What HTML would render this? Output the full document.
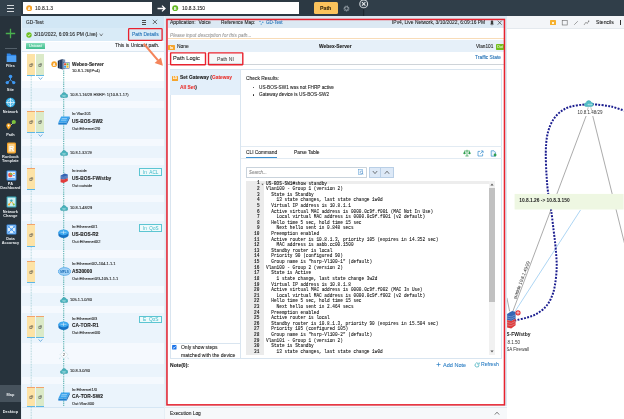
<!DOCTYPE html>
<html lang="en"><head><meta charset="utf-8"><title>Path Details</title>
<style>
*{box-sizing:border-box;margin:0;padding:0}
html,body{width:624px;height:419px;overflow:hidden;background:#fff}
body{position:relative;font-family:"Liberation Sans",Arial,sans-serif;font-size:5px;color:#222;line-height:1}
.a{position:absolute}
.t{position:absolute;white-space:pre;line-height:1;transform:scale(.125);transform-origin:0 0;-webkit-text-stroke:0.7px currentColor}
.b{font-weight:bold}
.sb{position:absolute;left:0;width:166.4px;text-align:center;color:#e8ecef;font-size:30.8px;font-weight:bold;line-height:36px;white-space:pre;transform:scale(.125);transform-origin:0 0}
.mono{font-family:"Liberation Mono",monospace;-webkit-text-stroke:0}
.ns{-webkit-text-stroke:0}
svg text{font-family:"Liberation Sans",Arial,sans-serif}
#root{position:absolute;left:0;top:0;width:624px;height:419px;overflow:hidden;will-change:transform}
</style></head><body>
<div id="root"><div class="a" style="left:165px;top:15.8px;width:342.5px;height:403.2px;background:#dce9f3"></div><div class="a" style="left:167.9px;top:20px;width:335.9px;height:385px;background:#fff"></div><div class="a" style="left:167.9px;top:20px;width:335.9px;height:7.7px;background:#dce9f3"></div><div class="t" style="left:169.5px;top:19.61px;font-size:39.84px;color:#222">Application:  Voice</div><div class="t" style="left:221.2px;top:19.7px;font-size:38.45px;color:#222">Reference Map:</div><svg class="a" style="left:259.3px;top:19.7px" width="5" height="5" viewBox="0 0 5 5"><circle cx="1" cy="1.4" r="0.7" fill="#3a8fd0"/><circle cx="3.8" cy="2.2" r="0.7" fill="#3a8fd0"/><circle cx="2.2" cy="4.1" r="0.7" fill="#3a8fd0"/></svg><div class="t" style="left:266.4px;top:19.86px;font-size:36.21px;color:#1f6fb5">GD-Test</div><div class="t" style="left:391.8px;top:19.65px;font-size:39.22px;color:#222">IPv4, Live Network, 3/10/2022, 6:09:16 PM</div><svg class="a" style="left:489.8px;top:19.8px" width="4" height="6" viewBox="0 0 4 6"><path d="M1.1 0.8h1.8v2.6l0.6 0.8h-3l0.6-0.8zM2 4.2v1.4" fill="#333" stroke="#333" stroke-width="0.4"/></svg><svg class="a" style="left:497px;top:20.3px" width="6" height="6" viewBox="0 0 6 6"><path d="M0.7 0.7L4.7 4.7M4.7 0.7L0.7 4.7" stroke="#333" stroke-width="0.65"/></svg><div class="t" style="left:169.5px;top:32.6px;font-size:38.46px;color:#9a9a9a;font-style:italic">Please input description for this path...</div><div class="a" style="left:167.9px;top:38px;width:335.9px;height:0.8px;background:#f8dcb8"></div><div class="a" style="left:167.9px;top:40.4px;width:335.9px;height:11.6px;background:#e6f0f9"></div><div class="a" style="left:167.9px;top:44.5px;width:6.8px;height:5.2px;background:#f5a52e;border-radius:0.6px"></div><div class="t b" style="left:169.6px;top:45.63px;font-size:25.6px;color:#fff">In</div><div class="t" style="left:177px;top:43.76px;font-size:39.15px;color:#222">None</div><div class="t b" style="left:318.7px;top:44.4px;font-size:39.21px;color:#1a1a1a">Webex-Server</div><div class="t" style="left:476px;top:43.85px;font-size:37.71px;color:#222">Vlan101</div><div class="a" style="left:496px;top:43.9px;width:7.8px;height:5.8px;background:#72bf1e;border-radius:0.7px"></div><div class="t" style="left:497.2px;top:45.14px;font-size:28.8px;color:#eaf8d6">Out</div><div class="a" style="left:167.9px;top:64px;width:335.9px;height:0.7px;background:#cfd4d9"></div><div class="a" style="left:170.6px;top:52.9px;width:34.9px;height:11.8px;background:#fff"></div><div class="t" style="left:173.2px;top:55.32px;font-size:45.37px;color:#222">Path Logic</div><div class="a" style="left:208.5px;top:52.9px;width:34.3px;height:11.8px;background:#f6f7f8"></div><div class="a" style="left:209px;top:62.6px;width:33.4px;height:0.6px;background:#d5d9dd"></div><div class="t" style="left:216.9px;top:56.62px;font-size:40.54px;color:#555">Path NI</div><div class="t" style="left:475.4px;top:55.37px;font-size:38.98px;color:#1f6fb5">Traffic State</div><div class="a" style="left:169.5px;top:69.3px;width:332.3px;height:290px;background:#fff;border:0.6px solid #d9e5f0"></div><div class="a" style="left:170.1px;top:70px;width:70.2px;height:24.8px;background:#e3effa"></div><div class="a" style="left:240.3px;top:69.8px;width:0.6px;height:289px;background:#d9e5f0"></div><div class="a" style="left:172.3px;top:75.8px;width:6px;height:4.8px;background:#f5a52e;border-radius:0.6px"></div><div class="t b" style="left:173.4px;top:76.88px;font-size:23.2px;color:#fff">LG</div><div class="t b" style="left:180.4px;top:75.47px;font-size:38.91px;color:#1a1a1a">Set Gateway (<span style="color:#e8332f">Gateway</span></div><div class="t b" style="left:180.4px;top:84.67px;font-size:39.01px;color:#e8332f">All Set<span style="color:#1a1a1a">)</span></div><div class="a" style="left:170.1px;top:342.8px;width:70.2px;height:0.6px;background:#d9e5f0"></div><svg class="a" style="left:172.3px;top:345.2px" width="4.6" height="4.6" viewBox="0 0 4.6 4.6"><rect x="0.1" y="0.1" width="4.4" height="4.4" rx="0.6" fill="#1a73e8"/><path d="M1 2.4L1.9 3.3L3.6 1.3" fill="none" stroke="#fff" stroke-width="0.7"/></svg><div class="t" style="left:181px;top:344.81px;font-size:39.8px;color:#222">Only show steps</div><div class="t" style="left:181px;top:352.76px;font-size:40.57px;color:#222">matched with the device</div><div class="t" style="left:245.9px;top:75.74px;font-size:39.38px;color:#222">Check Results:</div><div class="a" style="left:252.6px;top:86.8px;width:1.7px;height:1.7px;background:#222;border-radius:50%"></div><div class="a" style="left:252.6px;top:94px;width:1.7px;height:1.7px;background:#222;border-radius:50%"></div><div class="t" style="left:259.2px;top:85.06px;font-size:37.66px;color:#222">US-BOS-SW1 was not FHRP active</div><div class="t" style="left:259.2px;top:92.23px;font-size:38.08px;color:#222">Gateway device is US-BOS-SW2</div><div class="a" style="left:241px;top:146.3px;width:260.5px;height:0.6px;background:#e2ebf3"></div><div class="a" style="left:241px;top:157.7px;width:260.5px;height:0.6px;background:#e2ebf3"></div><div class="t" style="left:245.7px;top:149.8px;font-size:38.59px;color:#222">CLI Command</div><div class="a" style="left:245.7px;top:156.6px;width:31.4px;height:0.9px;background:#3a8fd0"></div><div class="t" style="left:293.5px;top:150.18px;font-size:38.76px;color:#222">Parse Table</div><svg class="a" style="left:462.8px;top:149px" width="8" height="8" viewBox="0 0 8 8"><path d="M4 0.8V7M2.4 7h3.2M1.2 2h5.6" stroke="#2e9e4f" stroke-width="0.7" fill="none"/><path d="M0.3 4.2L1.5 2.1L2.7 4.2a1.2 1 0 0 1-2.4 0zM5.3 4.2L6.5 2.1L7.7 4.2a1.2 1 0 0 1-2.4 0z" fill="#2e9e4f"/></svg><svg class="a" style="left:476.8px;top:149.5px" width="7" height="7" viewBox="0 0 7 7"><path d="M3.2 1.4H1v4.6h4.6V3.8" fill="none" stroke="#3a8fd0" stroke-width="0.7"/><path d="M3.2 3.8L6 1M4 0.9h2.1V3" fill="none" stroke="#3a8fd0" stroke-width="0.7"/></svg><svg class="a" style="left:489.5px;top:149.5px" width="7" height="7" viewBox="0 0 7 7"><path d="M1.2 0.8h2.8l1.4 1.4V6.2H1.2z" fill="#eaf4fc" stroke="#3a8fd0" stroke-width="0.7"/><circle cx="5.1" cy="5" r="1.4" fill="#2e9e4f"/></svg><div class="a" style="left:245.5px;top:166.6px;width:121.2px;height:11.2px;background:#fff;border:0.6px solid #c9d3dc;border-radius:0.6px"></div><div class="t" style="left:248.7px;top:170.0px;font-size:35.58px;color:#8c8c8c;font-style:italic">Search...</div><svg class="a" style="left:357.6px;top:169.2px" width="6" height="6" viewBox="0 0 6 6"><rect x="0.6" y="0.5" width="3.8" height="4.8" fill="#eaf4fc" stroke="#5a9bd4" stroke-width="0.5"/><circle cx="3.4" cy="3.3" r="1.2" fill="#fff" stroke="#3a7fc0" stroke-width="0.5"/><path d="M4.3 4.2L5.4 5.3" stroke="#3a7fc0" stroke-width="0.6"/></svg><div class="a" style="left:369px;top:166.6px;width:12px;height:11.2px;background:#dde9f7;border:0.6px solid #b9cfe6"></div><div class="a" style="left:381px;top:166.6px;width:12.8px;height:11.2px;background:#dde9f7;border:0.6px solid #b9cfe6;border-left:none"></div><svg class="a" style="left:371.8px;top:169.7px" width="6" height="5" viewBox="0 0 6 5"><path d="M0.8 1L3 3.6L5.2 1" fill="none" stroke="#444" stroke-width="0.7"/></svg><svg class="a" style="left:384.3px;top:169.7px" width="6" height="5" viewBox="0 0 6 5"><path d="M0.8 3.8L3 1.2L5.2 3.8" fill="none" stroke="#444" stroke-width="0.7"/></svg><div class="a" style="left:245.7px;top:181.3px;width:249.6px;height:173.4px;background:#fff"></div><div class="a" style="left:245.7px;top:181.3px;width:249.6px;height:2.4px;background:#ededed"></div><div class="a" style="left:245.7px;top:181.3px;width:18.7px;height:173.4px;background:#ebebeb"></div><div class="a" style="left:488.6px;top:181.3px;width:6.7px;height:173.4px;background:#f1f1f1"></div><div class="a" style="left:489.2px;top:187.7px;width:5.5px;height:114.6px;background:#c1c1c1"></div><svg class="a" style="left:490px;top:183.3px" width="4" height="3" viewBox="0 0 4 3"><path d="M0.4 2.4L2 0.6L3.6 2.4z" fill="#555"/></svg><svg class="a" style="left:490px;top:349.7px" width="4" height="3" viewBox="0 0 4 3"><path d="M0.4 0.6L2 2.4L3.6 0.6z" fill="#555"/></svg><div class="t b mono" style="left:256.8px;top:181.48px;font-size:36.0px;color:#222">1</div><div class="t mono" style="left:266.4px;top:181.52px;font-size:35.36px;color:#0a0a0a;-webkit-text-stroke:0.5px #0a0a0a">US-BOS-SW1#show standby</div><div class="t b mono" style="left:256.8px;top:187.1px;font-size:36.0px;color:#222">2</div><div class="t mono" style="left:266.4px;top:187.14px;font-size:35.36px;color:#0a0a0a;-webkit-text-stroke:0.5px #0a0a0a">Vlan100 - Group 1 (version 2)</div><div class="t b mono" style="left:256.8px;top:192.71px;font-size:36.0px;color:#222">3</div><div class="t mono" style="left:266.4px;top:192.75px;font-size:35.36px;color:#0a0a0a;-webkit-text-stroke:0.5px #0a0a0a">  State is Standby</div><div class="t b mono" style="left:256.8px;top:198.32px;font-size:36.0px;color:#222">4</div><div class="t mono" style="left:266.4px;top:198.36px;font-size:35.36px;color:#0a0a0a;-webkit-text-stroke:0.5px #0a0a0a">    13 state changes, last state change 1w0d</div><div class="t b mono" style="left:256.8px;top:203.94px;font-size:36.0px;color:#222">5</div><div class="t mono" style="left:266.4px;top:203.97px;font-size:35.36px;color:#0a0a0a;-webkit-text-stroke:0.5px #0a0a0a">  Virtual IP address is 10.8.1.1</div><div class="t b mono" style="left:256.8px;top:209.55px;font-size:36.0px;color:#222">6</div><div class="t mono" style="left:266.4px;top:209.59px;font-size:35.36px;color:#0a0a0a;-webkit-text-stroke:0.5px #0a0a0a">  Active virtual MAC address is 0000.0c9f.f001 (MAC Not In Use)</div><div class="t b mono" style="left:256.8px;top:215.16px;font-size:36.0px;color:#222">7</div><div class="t mono" style="left:266.4px;top:215.2px;font-size:35.36px;color:#0a0a0a;-webkit-text-stroke:0.5px #0a0a0a">    Local virtual MAC address is 0000.0c9f.f001 (v2 default)</div><div class="t b mono" style="left:256.8px;top:220.78px;font-size:36.0px;color:#222">8</div><div class="t mono" style="left:266.4px;top:220.81px;font-size:35.36px;color:#0a0a0a;-webkit-text-stroke:0.5px #0a0a0a">  Hello time 5 sec, hold time 15 sec</div><div class="t b mono" style="left:256.8px;top:226.39px;font-size:36.0px;color:#222">9</div><div class="t mono" style="left:266.4px;top:226.43px;font-size:35.36px;color:#0a0a0a;-webkit-text-stroke:0.5px #0a0a0a">    Next hello sent in 0.848 secs</div><div class="t b mono" style="left:254.1px;top:232.0px;font-size:36.0px;color:#222">10</div><div class="t mono" style="left:266.4px;top:232.04px;font-size:35.36px;color:#0a0a0a;-webkit-text-stroke:0.5px #0a0a0a">  Preemption enabled</div><div class="t b mono" style="left:254.1px;top:237.61px;font-size:36.0px;color:#222">11</div><div class="t mono" style="left:266.4px;top:237.65px;font-size:35.36px;color:#0a0a0a;-webkit-text-stroke:0.5px #0a0a0a">  Active router is 10.8.1.3, priority 105 (expires in 14.352 sec)</div><div class="t b mono" style="left:254.1px;top:243.23px;font-size:36.0px;color:#222">12</div><div class="t mono" style="left:266.4px;top:243.27px;font-size:35.36px;color:#0a0a0a;-webkit-text-stroke:0.5px #0a0a0a">    MAC address is aabb.cc00.1500</div><div class="t b mono" style="left:254.1px;top:248.84px;font-size:36.0px;color:#222">13</div><div class="t mono" style="left:266.4px;top:248.88px;font-size:35.36px;color:#0a0a0a;-webkit-text-stroke:0.5px #0a0a0a">  Standby router is local</div><div class="t b mono" style="left:254.1px;top:254.45px;font-size:36.0px;color:#222">14</div><div class="t mono" style="left:266.4px;top:254.49px;font-size:35.36px;color:#0a0a0a;-webkit-text-stroke:0.5px #0a0a0a">  Priority 90 (configured 90)</div><div class="t b mono" style="left:254.1px;top:260.07px;font-size:36.0px;color:#222">15</div><div class="t mono" style="left:266.4px;top:260.1px;font-size:35.36px;color:#0a0a0a;-webkit-text-stroke:0.5px #0a0a0a">  Group name is "hsrp-Vl100-1" (default)</div><div class="t b mono" style="left:254.1px;top:265.68px;font-size:36.0px;color:#222">16</div><div class="t mono" style="left:266.4px;top:265.72px;font-size:35.36px;color:#0a0a0a;-webkit-text-stroke:0.5px #0a0a0a">Vlan100 - Group 2 (version 2)</div><div class="t b mono" style="left:254.1px;top:271.29px;font-size:36.0px;color:#222">17</div><div class="t mono" style="left:266.4px;top:271.33px;font-size:35.36px;color:#0a0a0a;-webkit-text-stroke:0.5px #0a0a0a">  State is Active</div><div class="t b mono" style="left:254.1px;top:276.91px;font-size:36.0px;color:#222">18</div><div class="t mono" style="left:266.4px;top:276.94px;font-size:35.36px;color:#0a0a0a;-webkit-text-stroke:0.5px #0a0a0a">    1 state change, last state change 3w2d</div><div class="t b mono" style="left:254.1px;top:282.52px;font-size:36.0px;color:#222">19</div><div class="t mono" style="left:266.4px;top:282.56px;font-size:35.36px;color:#0a0a0a;-webkit-text-stroke:0.5px #0a0a0a">  Virtual IP address is 10.8.1.8</div><div class="t b mono" style="left:254.1px;top:288.13px;font-size:36.0px;color:#222">20</div><div class="t mono" style="left:266.4px;top:288.17px;font-size:35.36px;color:#0a0a0a;-webkit-text-stroke:0.5px #0a0a0a">  Active virtual MAC address is 0000.0c9f.f002 (MAC In Use)</div><div class="t b mono" style="left:254.1px;top:293.75px;font-size:36.0px;color:#222">21</div><div class="t mono" style="left:266.4px;top:293.78px;font-size:35.36px;color:#0a0a0a;-webkit-text-stroke:0.5px #0a0a0a">    Local virtual MAC address is 0000.0c9f.f002 (v2 default)</div><div class="t b mono" style="left:254.1px;top:299.36px;font-size:36.0px;color:#222">22</div><div class="t mono" style="left:266.4px;top:299.4px;font-size:35.36px;color:#0a0a0a;-webkit-text-stroke:0.5px #0a0a0a">  Hello time 5 sec, hold time 15 sec</div><div class="t b mono" style="left:254.1px;top:304.97px;font-size:36.0px;color:#222">23</div><div class="t mono" style="left:266.4px;top:305.01px;font-size:35.36px;color:#0a0a0a;-webkit-text-stroke:0.5px #0a0a0a">    Next hello sent in 2.464 secs</div><div class="t b mono" style="left:254.1px;top:310.58px;font-size:36.0px;color:#222">24</div><div class="t mono" style="left:266.4px;top:310.62px;font-size:35.36px;color:#0a0a0a;-webkit-text-stroke:0.5px #0a0a0a">  Preemption enabled</div><div class="t b mono" style="left:254.1px;top:316.2px;font-size:36.0px;color:#222">25</div><div class="t mono" style="left:266.4px;top:316.23px;font-size:35.36px;color:#0a0a0a;-webkit-text-stroke:0.5px #0a0a0a">  Active router is local</div><div class="t b mono" style="left:254.1px;top:321.81px;font-size:36.0px;color:#222">26</div><div class="t mono" style="left:266.4px;top:321.85px;font-size:35.36px;color:#0a0a0a;-webkit-text-stroke:0.5px #0a0a0a">  Standby router is 10.8.1.3, priority 90 (expires in 15.504 sec)</div><div class="t b mono" style="left:254.1px;top:327.42px;font-size:36.0px;color:#222">27</div><div class="t mono" style="left:266.4px;top:327.46px;font-size:35.36px;color:#0a0a0a;-webkit-text-stroke:0.5px #0a0a0a">  Priority 105 (configured 105)</div><div class="t b mono" style="left:254.1px;top:333.04px;font-size:36.0px;color:#222">28</div><div class="t mono" style="left:266.4px;top:333.07px;font-size:35.36px;color:#0a0a0a;-webkit-text-stroke:0.5px #0a0a0a">  Group name is "hsrp-Vl100-2" (default)</div><div class="t b mono" style="left:254.1px;top:338.65px;font-size:36.0px;color:#222">29</div><div class="t mono" style="left:266.4px;top:338.69px;font-size:35.36px;color:#0a0a0a;-webkit-text-stroke:0.5px #0a0a0a">Vlan101 - Group 1 (version 2)</div><div class="t b mono" style="left:254.1px;top:344.26px;font-size:36.0px;color:#222">30</div><div class="t mono" style="left:266.4px;top:344.3px;font-size:35.36px;color:#0a0a0a;-webkit-text-stroke:0.5px #0a0a0a">  State is Standby</div><div class="t b mono" style="left:254.1px;top:349.88px;font-size:36.0px;color:#222">31</div><div class="t mono" style="left:266.4px;top:349.91px;font-size:35.36px;color:#0a0a0a;-webkit-text-stroke:0.5px #0a0a0a">    13 state changes, last state change 1w0d</div><svg class="a" style="left:261px;top:182.6px" width="3" height="3" viewBox="0 0 3 3"><path d="M0.4 0.8L1.5 2.2L2.6 0.8z" fill="#555"/></svg><div class="t b" style="left:170.2px;top:362.84px;font-size:40.24px;color:#1a1a1a">Note(0):</div><svg class="a" style="left:436px;top:362.3px" width="5" height="5" viewBox="0 0 5 5"><path d="M2.5 0.5V4.5M0.5 2.5H4.5" stroke="#2d7fc4" stroke-width="0.7"/></svg><div class="t" style="left:442.6px;top:361.81px;font-size:44.32px;color:#2d7fc4">Add Note</div><svg class="a" style="left:473.7px;top:361.8px" width="6" height="6" viewBox="0 0 6 6"><path d="M5 3a2 2 0 1 1-0.7-1.5" fill="none" stroke="#35a9b8" stroke-width="0.7"/><path d="M5.2 0.4V2.2H3.4" fill="none" stroke="#35a9b8" stroke-width="0.7"/></svg><div class="t" style="left:481.4px;top:362.05px;font-size:40.67px;color:#2d7fc4">Refresh</div><div class="a" style="left:165.2px;top:405.6px;width:342px;height:13.4px;background:#f6f8fa"></div><div class="a" style="left:165.2px;top:407.4px;width:342px;height:0.6px;background:#e3eaf0"></div><div class="t" style="left:170.2px;top:411.28px;font-size:38.88px;color:#222">Execution Log</div><svg class="a" style="left:494px;top:411px" width="6" height="5" viewBox="0 0 6 5"><path d="M0.8 3.6L3 1.2L5.2 3.6" fill="none" stroke="#444" stroke-width="0.7"/></svg><svg class="a" style="left:164px;top:17px" width="344" height="392" viewBox="164 17 344 392"><rect x="166.95" y="19.45" width="337.5" height="385.4" fill="none" stroke="#e8222e" stroke-width="1.5"/><rect x="170.6" y="52.9" width="34.9" height="11.8" rx="0.4" fill="none" stroke="#e8222e" stroke-width="1.4"/><rect x="208.5" y="52.9" width="34.3" height="11.8" rx="0.4" fill="none" stroke="#e8222e" stroke-width="1.4"/></svg><div class="a" style="left:20.8px;top:15.8px;width:144.6px;height:403.2px;background:#e6eef5"></div><div class="a" style="left:22.3px;top:15.8px;width:141.8px;height:403.2px;background:#fff"></div><div class="a" style="left:22.3px;top:15.8px;width:141.8px;height:12.4px;background:#d2e7f5"></div><div class="a" style="left:22.3px;top:28.2px;width:141.8px;height:13.3px;background:#d9ebf7"></div><div class="a" style="left:22.3px;top:41.5px;width:141.8px;height:10px;background:#f6fafe"></div><div class="t" style="left:25.8px;top:19.62px;font-size:38.18px;color:#222">GD-Test</div><div class="a" style="left:141.8px;top:20.4px;width:4.6px;height:1px;background:#4a4a4a"></div><div class="a" style="left:141.8px;top:22.1px;width:4.6px;height:1px;background:#4a4a4a"></div><div class="a" style="left:141.8px;top:23.8px;width:4.6px;height:1px;background:#4a4a4a"></div><svg class="a" style="left:152.3px;top:19.3px" width="6" height="6" viewBox="0 0 6 6"><path d="M0.8 0.8L5 5M5 0.8L0.8 5" stroke="#333" stroke-width="0.7"/></svg><svg class="a" style="left:25.5px;top:31.8px" width="6" height="6" viewBox="0 0 6 6"><circle cx="3" cy="3" r="2.7" fill="#6bbf1f"/><path d="M1.7 3.1L2.7 4L4.3 2.1" fill="none" stroke="#fff" stroke-width="0.8"/></svg><div class="t" style="left:34px;top:32.34px;font-size:39.39px;color:#222">3/10/2022, 6:09:16 PM (Live)</div><svg class="a" style="left:98.6px;top:33px" width="5" height="4" viewBox="0 0 5 4"><path d="M0.7 0.6L2.2 3L3.7 0.6" fill="none" stroke="#444" stroke-width="0.6"/></svg><div class="t" style="left:132.3px;top:32.48px;font-size:39.47px;color:#1f6fb5">Path Details</div><svg class="a" style="left:126px;top:26px" width="40" height="18" viewBox="126 26 40 18"><rect x="128.6" y="28.7" width="33.5" height="11.7" rx="0.7" fill="none" stroke="#e8222e" stroke-width="1.3"/></svg><div class="a" style="left:26.1px;top:42.6px;width:19.4px;height:6.2px;background:linear-gradient(#84dcb8,#40bd8e);border-radius:0.6px"></div><div class="t" style="left:29.3px;top:43.73px;font-size:30.71px;color:#e4faf0">Unicast</div><div class="t" style="left:114.5px;top:43.13px;font-size:39.54px;color:#222">This is Unicast path.</div><div class="a" style="left:22.3px;top:51.5px;width:141.8px;height:367.5px;background:#f5f9fe"></div><div class="a" style="left:22.3px;top:51.8px;width:141.8px;height:29.2px;background:#fff"></div><div class="a" style="left:22.3px;top:51.3px;width:141.8px;height:0.5px;background:#dbe7f1"></div><div class="a" style="left:22.3px;top:88px;width:141.8px;height:13px;background:#ebf4fc"></div><div class="a" style="left:22.3px;top:108.1px;width:141.8px;height:30.5px;background:#ebf4fc"></div><div class="a" style="left:22.3px;top:165.2px;width:141.8px;height:29.4px;background:#ebf4fc"></div><div class="a" style="left:22.3px;top:221.3px;width:141.8px;height:28.5px;background:#ebf4fc"></div><div class="a" style="left:22.3px;top:258px;width:141.8px;height:27.8px;background:#ebf4fc"></div><div class="a" style="left:22.3px;top:313.2px;width:141.8px;height:29.8px;background:#ebf4fc"></div><div class="a" style="left:22.3px;top:383.9px;width:141.8px;height:23.3px;background:#ebf4fc"></div><div class="a" style="left:22.3px;top:146.3px;width:141.8px;height:12.1px;background:#ebf4fc"></div><div class="a" style="left:22.3px;top:201.5px;width:141.8px;height:12.5px;background:#ebf4fc"></div><div class="a" style="left:22.3px;top:293.2px;width:141.8px;height:12.8px;background:#ebf4fc"></div><div class="a" style="left:22.3px;top:364px;width:141.8px;height:12.8px;background:#ebf4fc"></div><div class="a" style="left:22.3px;top:407.2px;width:141.8px;height:0.5px;background:#d5e6f4"></div><div class="a" style="left:22.3px;top:407.7px;width:141.8px;height:11.3px;background:#f0f6fb"></div><svg class="a" style="left:29px;top:70px" width="40" height="349" viewBox="29 70 40 349"><path d="M31.2 76V419" stroke="#86c2c6" stroke-width="0.7" stroke-dasharray="0.8 0.8"/><path d="M63.7 70.4V406" stroke="#5fb4b3" stroke-width="1.1" stroke-dasharray="1.3 0.9"/></svg><div class="a" style="left:27.2px;top:54.1px;width:8.1px;height:21.5px;background:#fde3a6"></div><div class="a" style="left:27.2px;top:75.0px;width:8.1px;height:1px;background:#5cb6e6"></div><svg class="a" style="left:29.3px;top:62.85px" width="4.4" height="4.4" viewBox="0 0 4.4 4.4"><path d="M0.8 1.4h2.1v2.1h-2.1z" fill="none" stroke="#3a3a3a" stroke-width="0.5"/><path d="M1.8 0.7h1.9v1.9" fill="none" stroke="#3a3a3a" stroke-width="0.45"/></svg><div class="a" style="left:35.9px;top:54.1px;width:8.1px;height:21.5px;background:#dbeac8"></div><div class="a" style="left:35.9px;top:75.0px;width:8.1px;height:1px;background:#5cb6e6"></div><svg class="a" style="left:38.0px;top:62.85px" width="4.4" height="4.4" viewBox="0 0 4.4 4.4"><path d="M0.8 1.4h2.1v2.1h-2.1z" fill="none" stroke="#3a3a3a" stroke-width="0.5"/><path d="M1.8 0.7h1.9v1.9" fill="none" stroke="#3a3a3a" stroke-width="0.45"/></svg><svg class="a" style="left:37.5px;top:76.50px" width="5" height="3" viewBox="0 0 5 3"><path d="M0.5 0.4L2.5 2.3L4.5 0.4" fill="none" stroke="#3a8fd0" stroke-width="0.7"/></svg><div class="a" style="left:27.2px;top:111.4px;width:8.1px;height:21.5px;background:#fde3a6"></div><div class="a" style="left:27.2px;top:111.0px;width:8.1px;height:0.9px;background:#f2a36c"></div><div class="a" style="left:27.2px;top:132.3px;width:8.1px;height:1px;background:#5cb6e6"></div><svg class="a" style="left:29.3px;top:120.15px" width="4.4" height="4.4" viewBox="0 0 4.4 4.4"><path d="M0.8 1.4h2.1v2.1h-2.1z" fill="none" stroke="#3a3a3a" stroke-width="0.5"/><path d="M1.8 0.7h1.9v1.9" fill="none" stroke="#3a3a3a" stroke-width="0.45"/></svg><div class="a" style="left:35.9px;top:111.4px;width:8.1px;height:21.5px;background:#dbeac8"></div><div class="a" style="left:35.9px;top:111.0px;width:8.1px;height:0.9px;background:#f2a36c"></div><div class="a" style="left:35.9px;top:132.3px;width:8.1px;height:1px;background:#5cb6e6"></div><svg class="a" style="left:38.0px;top:120.15px" width="4.4" height="4.4" viewBox="0 0 4.4 4.4"><path d="M0.8 1.4h2.1v2.1h-2.1z" fill="none" stroke="#3a3a3a" stroke-width="0.5"/><path d="M1.8 0.7h1.9v1.9" fill="none" stroke="#3a3a3a" stroke-width="0.45"/></svg><svg class="a" style="left:37.5px;top:133.80px" width="5" height="3" viewBox="0 0 5 3"><path d="M0.5 0.4L2.5 2.3L4.5 0.4" fill="none" stroke="#3a8fd0" stroke-width="0.7"/></svg><div class="a" style="left:27.2px;top:168.5px;width:8.1px;height:21.5px;background:#fde3a6"></div><div class="a" style="left:27.2px;top:168.1px;width:8.1px;height:0.9px;background:#f2a36c"></div><div class="a" style="left:27.2px;top:189.4px;width:8.1px;height:1px;background:#5cb6e6"></div><svg class="a" style="left:29.3px;top:177.25px" width="4.4" height="4.4" viewBox="0 0 4.4 4.4"><path d="M0.8 1.4h2.1v2.1h-2.1z" fill="none" stroke="#3a3a3a" stroke-width="0.5"/><path d="M1.8 0.7h1.9v1.9" fill="none" stroke="#3a3a3a" stroke-width="0.45"/></svg><div class="a" style="left:27.2px;top:224.6px;width:8.1px;height:21.6px;background:#fde3a6"></div><div class="a" style="left:27.2px;top:224.2px;width:8.1px;height:0.9px;background:#f2a36c"></div><div class="a" style="left:27.2px;top:245.6px;width:8.1px;height:1px;background:#5cb6e6"></div><svg class="a" style="left:29.3px;top:233.40px" width="4.4" height="4.4" viewBox="0 0 4.4 4.4"><path d="M0.8 1.4h2.1v2.1h-2.1z" fill="none" stroke="#3a3a3a" stroke-width="0.5"/><path d="M1.8 0.7h1.9v1.9" fill="none" stroke="#3a3a3a" stroke-width="0.45"/></svg><div class="a" style="left:27.2px;top:261.6px;width:8.1px;height:21.4px;background:#fde3a6"></div><div class="a" style="left:27.2px;top:261.2px;width:8.1px;height:0.9px;background:#f2a36c"></div><div class="a" style="left:27.2px;top:282.4px;width:8.1px;height:1px;background:#5cb6e6"></div><svg class="a" style="left:29.3px;top:270.30px" width="4.4" height="4.4" viewBox="0 0 4.4 4.4"><path d="M0.8 1.4h2.1v2.1h-2.1z" fill="none" stroke="#3a3a3a" stroke-width="0.5"/><path d="M1.8 0.7h1.9v1.9" fill="none" stroke="#3a3a3a" stroke-width="0.45"/></svg><div class="a" style="left:27.2px;top:316.4px;width:8.1px;height:21.6px;background:#fde3a6"></div><div class="a" style="left:27.2px;top:316.0px;width:8.1px;height:0.9px;background:#f2a36c"></div><div class="a" style="left:27.2px;top:337.4px;width:8.1px;height:1px;background:#5cb6e6"></div><svg class="a" style="left:29.3px;top:325.20px" width="4.4" height="4.4" viewBox="0 0 4.4 4.4"><path d="M0.8 1.4h2.1v2.1h-2.1z" fill="none" stroke="#3a3a3a" stroke-width="0.5"/><path d="M1.8 0.7h1.9v1.9" fill="none" stroke="#3a3a3a" stroke-width="0.45"/></svg><div class="a" style="left:35.9px;top:316.4px;width:8.1px;height:21.6px;background:#dbeac8"></div><div class="a" style="left:35.9px;top:316.0px;width:8.1px;height:0.9px;background:#f2a36c"></div><div class="a" style="left:35.9px;top:337.4px;width:8.1px;height:1px;background:#5cb6e6"></div><svg class="a" style="left:38.0px;top:325.20px" width="4.4" height="4.4" viewBox="0 0 4.4 4.4"><path d="M0.8 1.4h2.1v2.1h-2.1z" fill="none" stroke="#3a3a3a" stroke-width="0.5"/><path d="M1.8 0.7h1.9v1.9" fill="none" stroke="#3a3a3a" stroke-width="0.45"/></svg><svg class="a" style="left:37.5px;top:338.90px" width="5" height="3" viewBox="0 0 5 3"><path d="M0.5 0.4L2.5 2.3L4.5 0.4" fill="none" stroke="#3a8fd0" stroke-width="0.7"/></svg><div class="a" style="left:27.2px;top:387px;width:8.1px;height:19.3px;background:#fde3a6"></div><div class="a" style="left:27.2px;top:386.6px;width:8.1px;height:0.9px;background:#f2a36c"></div><div class="a" style="left:27.2px;top:405.7px;width:8.1px;height:1px;background:#5cb6e6"></div><svg class="a" style="left:29.3px;top:394.65px" width="4.4" height="4.4" viewBox="0 0 4.4 4.4"><path d="M0.8 1.4h2.1v2.1h-2.1z" fill="none" stroke="#3a3a3a" stroke-width="0.5"/><path d="M1.8 0.7h1.9v1.9" fill="none" stroke="#3a3a3a" stroke-width="0.45"/></svg><div class="a" style="left:35.9px;top:387px;width:8.1px;height:19.3px;background:#dbeac8"></div><div class="a" style="left:35.9px;top:386.6px;width:8.1px;height:0.9px;background:#f2a36c"></div><div class="a" style="left:35.9px;top:405.7px;width:8.1px;height:1px;background:#5cb6e6"></div><svg class="a" style="left:38.0px;top:394.65px" width="4.4" height="4.4" viewBox="0 0 4.4 4.4"><path d="M0.8 1.4h2.1v2.1h-2.1z" fill="none" stroke="#3a3a3a" stroke-width="0.5"/><path d="M1.8 0.7h1.9v1.9" fill="none" stroke="#3a3a3a" stroke-width="0.45"/></svg><svg class="a" style="left:59.7px;top:92.20px" width="8" height="6.4" viewBox="0 0 8 6.4"><path d="M2 5.6a1.6 1.6 0 0 1-0.2-3.2a2.3 2.3 0 0 1 4.4-0.3a1.75 1.75 0 0 1-0.1 3.5z" fill="#49b3bd" stroke="#2c8f9c" stroke-width="0.4"/><path d="M2.6 3.9h2.8M3.4 3.1l-0.8 0.8l0.8 0.8M4.6 3.1l0.8 0.8l-0.8 0.8" fill="none" stroke="#eaf8fa" stroke-width="0.4"/></svg><div class="t" style="left:70.1px;top:93.33px;font-size:32.13px;color:#222">10.8.1.16/28 HSRP: 1(10.8.1.17)</div><svg class="a" style="left:59.7px;top:149.50px" width="8" height="6.4" viewBox="0 0 8 6.4"><path d="M2 5.6a1.6 1.6 0 0 1-0.2-3.2a2.3 2.3 0 0 1 4.4-0.3a1.75 1.75 0 0 1-0.1 3.5z" fill="#49b3bd" stroke="#2c8f9c" stroke-width="0.4"/><path d="M2.6 3.9h2.8M3.4 3.1l-0.8 0.8l0.8 0.8M4.6 3.1l0.8 0.8l-0.8 0.8" fill="none" stroke="#eaf8fa" stroke-width="0.4"/></svg><div class="t" style="left:70.1px;top:150.68px;font-size:31.36px;color:#222">10.8.1.32/29</div><svg class="a" style="left:59.7px;top:205.10px" width="8" height="6.4" viewBox="0 0 8 6.4"><path d="M2 5.6a1.6 1.6 0 0 1-0.2-3.2a2.3 2.3 0 0 1 4.4-0.3a1.75 1.75 0 0 1-0.1 3.5z" fill="#49b3bd" stroke="#2c8f9c" stroke-width="0.4"/><path d="M2.6 3.9h2.8M3.4 3.1l-0.8 0.8l0.8 0.8M4.6 3.1l0.8 0.8l-0.8 0.8" fill="none" stroke="#eaf8fa" stroke-width="0.4"/></svg><div class="t" style="left:70.1px;top:206.24px;font-size:31.94px;color:#222">10.8.1.48/29</div><svg class="a" style="left:59.7px;top:296.90px" width="8" height="6.4" viewBox="0 0 8 6.4"><path d="M2 5.6a1.6 1.6 0 0 1-0.2-3.2a2.3 2.3 0 0 1 4.4-0.3a1.75 1.75 0 0 1-0.1 3.5z" fill="#49b3bd" stroke="#2c8f9c" stroke-width="0.4"/><path d="M2.6 3.9h2.8M3.4 3.1l-0.8 0.8l0.8 0.8M4.6 3.1l0.8 0.8l-0.8 0.8" fill="none" stroke="#eaf8fa" stroke-width="0.4"/></svg><div class="t" style="left:70.1px;top:298.06px;font-size:31.65px;color:#222">105.1.1.0/30</div><svg class="a" style="left:59.7px;top:367.60px" width="8" height="6.4" viewBox="0 0 8 6.4"><path d="M2 5.6a1.6 1.6 0 0 1-0.2-3.2a2.3 2.3 0 0 1 4.4-0.3a1.75 1.75 0 0 1-0.1 3.5z" fill="#49b3bd" stroke="#2c8f9c" stroke-width="0.4"/><path d="M2.6 3.9h2.8M3.4 3.1l-0.8 0.8l0.8 0.8M4.6 3.1l0.8 0.8l-0.8 0.8" fill="none" stroke="#eaf8fa" stroke-width="0.4"/></svg><div class="t" style="left:70.1px;top:368.74px;font-size:31.97px;color:#222">10.8.3.0/30</div><div class="t b" style="left:71.6px;top:61.66px;font-size:38.24px;color:#1a1a1a">Webex-Server</div><div class="t" style="left:71.6px;top:69.2px;font-size:32.53px;color:#222">10.8.1.26(IPv4)</div><svg class="a" style="left:50.8px;top:60.8px" width="6.4" height="6.4" viewBox="0 0 6.4 6.4"><circle cx="3.2" cy="3.2" r="2.9" fill="#f6a32b"/><text x="3.2" y="4.6" font-size="3.9" font-weight="bold" text-anchor="middle" fill="#fff">A</text></svg><svg class="a" style="left:56.6px;top:57.6px" width="13" height="13" viewBox="0 0 13 13"><path d="M2.2 2.1L5.8 1.1V11.6L2.2 10.6z" fill="#2a3f63"/><path d="M5.8 1.1L8.2 1.8V11L5.8 11.6z" fill="#7d93b5"/><path d="M0.8 2.8L2.2 2.3V10.4L0.8 9.9z" fill="#1c2b45"/><rect x="6.4" y="4.6" width="5.8" height="5.8" fill="#f4f6f9" stroke="#3e5f95" stroke-width="0.5"/><rect x="7.1" y="5.3" width="2" height="2" fill="#e8502c"/><rect x="9.5" y="5.3" width="2" height="2" fill="#7cbb2e"/><rect x="7.1" y="7.7" width="2" height="2" fill="#2f9be6"/><rect x="9.5" y="7.7" width="2" height="2" fill="#f7bb1a"/></svg><div class="t" style="left:71.7px;top:112.05px;font-size:31.79px;color:#222">In:Vlan101</div><div class="t b" style="left:71.7px;top:118.84px;font-size:38.56px;color:#1a1a1a">US-BOS-SW2</div><div class="t" style="left:71.7px;top:126.54px;font-size:31.95px;color:#222">Out:Ethernet2/0</div><div class="t" style="left:71.7px;top:169.15px;font-size:31.79px;color:#222">In:inside</div><div class="t b" style="left:71.7px;top:175.93px;font-size:38.76px;color:#1a1a1a">US-BOS-FW/stby</div><div class="t" style="left:71.7px;top:183.66px;font-size:31.75px;color:#222">Out:outside</div><div class="t" style="left:71.7px;top:224.92px;font-size:32.34px;color:#222">In:Ethernet0/1</div><div class="t b" style="left:71.7px;top:231.54px;font-size:38.54px;color:#1a1a1a">US-BOS-R2</div><div class="t" style="left:71.7px;top:239.62px;font-size:32.29px;color:#222">Out:Ethernet0/2</div><div class="t" style="left:71.7px;top:262.32px;font-size:32.26px;color:#222">In:Ethernet0/2-104.1.1.1</div><div class="t b" style="left:71.7px;top:268.63px;font-size:38.75px;color:#1a1a1a">AS30000</div><div class="t" style="left:71.7px;top:276.54px;font-size:31.96px;color:#222">Out:Ethernet0/3-105.1.1.1</div><div class="t" style="left:71.7px;top:316.63px;font-size:32.22px;color:#222">In:Ethernet0/3</div><div class="t b" style="left:71.7px;top:323.12px;font-size:38.82px;color:#1a1a1a">CA-TOR-R1</div><div class="t" style="left:71.7px;top:331.34px;font-size:32.07px;color:#222">Out:Ethernet0/0</div><div class="t" style="left:71.7px;top:387.95px;font-size:31.84px;color:#222">In:Ethernet1/0</div><div class="t b" style="left:71.7px;top:394.32px;font-size:38.93px;color:#1a1a1a">CA-TOR-SW2</div><div class="t" style="left:71.7px;top:402.03px;font-size:32.09px;color:#222">Out:Vlan300</div><svg class="a" style="left:57.8px;top:116.40px" width="12" height="9.2" viewBox="0 0 12 9.2"><path d="M0.3 6.6L3.2 0.6H11.7L8.8 6.6z" fill="#3aa4ee"/><path d="M0.3 6.6H8.8V8.6H0.3z" fill="#1d7fd0"/><path d="M8.8 6.6L11.7 0.6V2.6L8.8 8.6z" fill="#1668b3"/><path d="M3.6 2.6h5.4M3 4.2h5.4" stroke="#d7eefc" stroke-width="0.55"/></svg><svg class="a" style="left:59.89999999999999px;top:173.30px" width="8.4" height="10.4" viewBox="0 0 8.4 10.4"><path d="M0.6 2.4L4.6 0.5L7.8 1.4V5.2L3.6 6.6L0.6 6z" fill="#3565b4"/><path d="M0.6 6L3.6 6.6L7.8 5.2V8L3.6 9.9L0.6 9.2z" fill="#e03b3b"/><path d="M0.6 3.6L3.6 4.2L7.8 2.9M0.6 4.8L3.6 5.4L7.8 4.1" stroke="#c9d6ea" stroke-width="0.3" fill="none"/></svg><svg class="a" style="left:58.3px;top:229.30px" width="11" height="9.4" viewBox="0 0 11 9.4"><path d="M0.4 3.3V6A5.1 2.9 0 0 0 10.6 6V3.3z" fill="#1672c4"/><ellipse cx="5.5" cy="3.3" rx="5.1" ry="2.9" fill="#3fa9f0"/><path d="M2.6 3.3h5.8M5.5 1.5v3.6" stroke="#e2f3fd" stroke-width="0.55"/></svg><svg class="a" style="left:57.5px;top:266.50px" width="13" height="9" viewBox="0 0 13 9"><ellipse cx="6.5" cy="4.5" rx="6.2" ry="3.9" fill="#9fd0f6" stroke="#4aa3e6" stroke-width="0.7"/><text x="6.5" y="5.6" font-size="3.1" font-weight="bold" text-anchor="middle" fill="#1668b3">MPLS</text></svg><svg class="a" style="left:57.9px;top:321.00px" width="11" height="9.4" viewBox="0 0 11 9.4"><path d="M0.4 3.3V6A5.1 2.9 0 0 0 10.6 6V3.3z" fill="#1672c4"/><ellipse cx="5.5" cy="3.3" rx="5.1" ry="2.9" fill="#3fa9f0"/><path d="M2.6 3.3h5.8M5.5 1.5v3.6" stroke="#e2f3fd" stroke-width="0.55"/></svg><svg class="a" style="left:57.6px;top:392.10px" width="12" height="9.2" viewBox="0 0 12 9.2"><path d="M0.3 6.6L3.2 0.6H11.7L8.8 6.6z" fill="#3aa4ee"/><path d="M0.3 6.6H8.8V8.6H0.3z" fill="#1d7fd0"/><path d="M8.8 6.6L11.7 0.6V2.6L8.8 8.6z" fill="#1668b3"/><path d="M3.6 2.6h5.4M3 4.2h5.4" stroke="#d7eefc" stroke-width="0.55"/></svg><svg class="a" style="left:58.6px;top:349.7px" width="10" height="10" viewBox="0 0 10 10"><path d="M5 0.8L9 4.7L5 8.6L1 4.7z" fill="#fbfdfe" stroke="#9fc9d3" stroke-width="0.5" stroke-dasharray="1 0.6"/><text x="5" y="6.2" font-size="4.2" text-anchor="middle" fill="#444">2</text><path d="M1.2 7.6L0.4 9.2M8.8 7.6L9.6 9.2" stroke="#9fc9d3" stroke-width="0.5"/></svg><div class="a" style="left:139.4px;top:168.1px;width:22.2px;height:7.6px;background:#eefafb;border:0.7px solid #5cc5d2"></div><div class="t" style="left:143.1px;top:169.68px;font-size:37.81px;color:#3bb8c8;-webkit-text-stroke:0">In  ACL</div><div class="a" style="left:139.4px;top:224.4px;width:22.2px;height:7.6px;background:#eefafb;border:0.7px solid #5cc5d2"></div><div class="t" style="left:143.1px;top:226.06px;font-size:36.57px;color:#3bb8c8;-webkit-text-stroke:0">In  QoS</div><div class="a" style="left:139.4px;top:315.8px;width:22.2px;height:7.6px;background:#eefafb;border:0.7px solid #5cc5d2"></div><div class="t" style="left:143.1px;top:317.34px;font-size:38.47px;color:#3bb8c8;-webkit-text-stroke:0">E  QoS</div><svg class="a" style="left:140px;top:40px" width="28" height="30" viewBox="140 40 28 30"><path d="M143.7 43.6L158 60.4" stroke="#f4845a" stroke-width="2.1"/><path d="M162.9 65.8L154.6 62.9L161 57.5z" fill="#f4845a"/></svg><div class="a" style="left:507.4px;top:15.8px;width:116.6px;height:403.2px;background:#fff"></div><div class="a" style="left:507.4px;top:15.8px;width:116.6px;height:12.4px;background:#f3f5f8"></div><div class="a" style="left:507.4px;top:28.2px;width:116.6px;height:0.5px;background:#e4e9ee"></div><div class="a" style="left:550.4px;top:20px;width:5.2px;height:5.2px;background:#f6b02e;border-radius:0.6px"></div><div class="a" style="left:552px;top:21.6px;width:2px;height:2px;background:#fff3d6"></div><svg class="a" style="left:560.5px;top:19px" width="8" height="8" viewBox="0 0 8 8"><rect x="1.2" y="1.3" width="5" height="4.7" fill="none" stroke="#666" stroke-width="0.6"/></svg><svg class="a" style="left:572.5px;top:19.6px" width="6" height="6" viewBox="0 0 6 6"><path d="M1.2 4.8L4.8 1.2" stroke="#666" stroke-width="0.6"/></svg><svg class="a" style="left:583px;top:19.6px" width="7" height="6" viewBox="0 0 7 6"><path d="M1 5L3 2.2L4.2 3.6L5.6 1.2" fill="none" stroke="#666" stroke-width="0.6"/><circle cx="5.7" cy="1.1" r="0.7" fill="#666"/></svg><div class="t" style="left:595.6px;top:19.65px;font-size:40.67px;color:#222">Stencils</div><div class="a" style="left:619.8px;top:19.6px;width:0.7px;height:5.8px;background:#333"></div><svg class="a" style="left:507.4px;top:28.7px" width="116.6" height="376.8" viewBox="507.4 28.7 116.6 376.8">
<path d="M586.5 115.7L512.9 312" stroke="#555" stroke-width="0.5" fill="none"/>
<path d="M593.2 115.7L625 243.4" stroke="#555" stroke-width="0.5" fill="none"/>
<path d="M507.3 297.5L510 311" stroke="#555" stroke-width="0.5" fill="none"/>
<path d="M581 209.6L514.6 312.4" stroke="#5aa9e6" stroke-width="0.5" fill="none"/>
<path d="M626 110.8C623.6 110.0 616.3 107.3 611.5 106.2C606.7 105.1 600.7 104.7 597.2 104.3C593.7 103.9 592.8 104.0 590.4 104C588.0 104.0 586.0 104.0 582.9 104.4C579.8 104.8 574.8 105.3 571.5 106.2C568.2 107.1 565.5 108.3 562.9 110C560.3 111.7 557.7 114.0 555.7 116.5C553.7 119.0 552.1 121.7 550.7 125C549.3 128.3 548.1 132.0 547.4 136.5C546.6 141.0 546.3 145.9 546.2 152.2C546.1 158.5 546.5 167.7 546.9 174.4C547.3 181.1 547.7 186.5 548.5 192.4C549.3 198.3 550.6 203.4 551.5 209.6C552.4 215.8 553.2 223.3 554 229.8C554.8 236.3 555.6 242.2 556.1 248.4C556.6 254.6 557.2 260.8 557.1 267C557.0 273.2 556.1 280.4 555.2 285.6C554.3 290.8 553.1 294.4 551.5 298C549.9 301.6 547.9 304.6 545.3 307.3C542.7 310.0 539.1 312.4 536 314.1C532.9 315.8 529.8 316.6 526.7 317.5C523.6 318.4 519.4 319.2 517.4 319.7C515.4 320.1 515.0 320.1 514.5 320.2" stroke="#1b1d8f" stroke-width="2" stroke-dasharray="1.9 1.35" fill="none"/>
<rect x="515" y="193.6" width="109" height="15.6" fill="#eef7e2"/>
<text x="519.6" y="201.96" font-size="4.88" font-weight="bold" fill="#1a1a1a">10.8.1.26 -&gt; 10.8.3.150</text>
<path d="M588.6 107L587.6 110.5M591.2 107L592.2 110.5" stroke="#666" stroke-width="0.4"/>
<path d="M586.6 106.2a1.8 1.8 0 0 1-0.2-3.6a2.8 2.8 0 0 1 5.4-0.4a2 2 0 0 1-0.1 4z" fill="#52bcc6" stroke="#2c98a5" stroke-width="0.4"/>
<path d="M588.4 104.2h4M589.4 103.2l-1 1l1 1M591.4 103.2l1 1l-1 1" fill="none" stroke="#eefafb" stroke-width="0.45"/>
<text x="577.9" y="113.82" font-size="4.51" fill="#333">10.8.1.48/29</text>
<text transform="translate(516.3 299.2) rotate(-69.5)" font-size="4.45" fill="#111">outside 10.8.1.49/29</text>
<path d="M507.5 313.6L512.6 310.6L516 311.6V318.4L511.6 320.6L507.5 319.8z" fill="#3565b4"/>
<path d="M507.5 319.8L511.6 320.6L516 318.4V325L511.6 328.2L507.5 327.2z" fill="#e03b3b"/>
<path d="M507.5 315.7L511.6 316.6L516 314.4M507.5 317.8L511.6 318.7L516 316.5M507.5 322.2L511.6 323.1L516 320.9M507.5 324.6L511.6 325.5L516 323.3" stroke="#d5dff0" stroke-width="0.35" fill="none"/>
<circle cx="518.4" cy="312.5" r="2.6" fill="#e5343a"/>
<path d="M516.7 312.5h3.4M518.4 310.8v3.4" stroke="#fff" stroke-width="0.65"/>
<text x="506.6" y="336.10" font-size="4.99" font-weight="bold" fill="#222">S-FW/stby</text>
<text x="506.6" y="343.74" font-size="4.55" fill="#333">.8.1.50</text>
<text x="506.6" y="350.95" font-size="4.58" fill="#333">SA Firewall</text>
</svg><div class="a" style="left:0px;top:0px;width:624px;height:15.8px;background:#2c3943"></div><div class="a" style="left:365px;top:0px;width:259px;height:15.6px;background:#303e49"></div><div class="a" style="left:0px;top:0px;width:20.8px;height:15.8px;background:#33414c"></div><div class="a" style="left:7px;top:4.7px;width:7px;height:1.2px;background:#d5d9dd"></div><div class="a" style="left:7px;top:7.8px;width:7px;height:1.2px;background:#d5d9dd"></div><div class="a" style="left:7px;top:10.9px;width:7px;height:1.2px;background:#d5d9dd"></div><div class="a" style="left:23.3px;top:2px;width:128.4px;height:12.2px;background:#fff"></div><svg class="a" style="left:26px;top:5.1px" width="6.4" height="6.4" viewBox="0 0 6.4 6.4"><circle cx="3.2" cy="3.2" r="3" fill="#f6a32b"/><text x="3.2" y="4.6" font-size="3.9" font-weight="bold" text-anchor="middle" fill="#fff">A</text></svg><div class="t" style="left:35px;top:5.61px;font-size:39.84px;color:#222">10.8.1.3</div><svg class="a" style="left:156px;top:3px" width="11" height="11" viewBox="0 0 11 11"><path d="M1.5 5.5H9M6 2.6L9 5.5L6 8.4" fill="none" stroke="#fff" stroke-width="1.3"/></svg><div class="a" style="left:170px;top:2px;width:128.8px;height:12.2px;background:#fff"></div><svg class="a" style="left:172.3px;top:5.1px" width="6.4" height="6.4" viewBox="0 0 6.4 6.4"><circle cx="3.2" cy="3.2" r="3" fill="#62b822"/><text x="3.2" y="4.6" font-size="3.9" font-weight="bold" text-anchor="middle" fill="#fff">B</text></svg><div class="t" style="left:182px;top:5.67px;font-size:38.93px;color:#222">10.8.3.150</div><div class="a" style="left:313.7px;top:2.3px;width:24px;height:11.7px;background:#fbc35c;border-radius:1.5px"></div><div class="t b" style="left:320.3px;top:5.74px;font-size:41.71px;color:#3a2c10">Path</div><svg class="a" style="left:342.5px;top:4.5px" width="7" height="7" viewBox="0 0 7 7"><circle cx="3.5" cy="3.5" r="2.3" fill="none" stroke="#8e98a0" stroke-width="1.3" stroke-dasharray="0.9 0.55"/><circle cx="3.5" cy="3.5" r="1.7" fill="none" stroke="#8e98a0" stroke-width="1"/></svg><svg class="a" style="left:358px;top:-2px" width="12" height="12" viewBox="0 0 12 12"><circle cx="5.7" cy="5.9" r="3.9" fill="#3a4751" stroke="#d3d8dc" stroke-width="1.1"/><path d="M4 4.2L7.4 7.6M7.4 4.2L4 7.6" stroke="#e3e7ea" stroke-width="1.1"/></svg><div class="a" style="left:363.2px;top:8.6px;width:0.8px;height:7.2px;background:#1f2830"></div><div class="a" style="left:0px;top:15.8px;width:20.8px;height:403.2px;background:#27323b"></div><div class="a" style="left:0px;top:385.3px;width:20.8px;height:17px;background:#46525c"></div><svg class="a" style="left:5px;top:27.5px" width="11" height="11" viewBox="0 0 11 11"><path d="M5.5 0.8V10.2M0.8 5.5H10.2" stroke="#49b04e" stroke-width="1.3"/></svg><div class="a" style="left:5px;top:47.5px;width:12px;height:0.8px;background:#55616b"></div><svg class="a" style="left:5.5px;top:52px" width="11" height="11" viewBox="0 0 11 11"><path d="M0.8 1.5h3.4l1 1.2h5v7.3h-9.4z" fill="#2f86e8"/><path d="M0.8 4h9.4v6h-9.4z" fill="#4ea1f5"/></svg><div class="sb" style="top:63.45px">Files</div><svg class="a" style="left:5px;top:74px" width="11" height="11" viewBox="0 0 11 11"><path d="M5.5 3.5V6M5.5 6L2.4 8.2M5.5 6L8.6 8.2" stroke="#3d97f2" stroke-width="0.9"/><circle cx="5.5" cy="2.6" r="1.8" fill="#3d97f2"/><circle cx="2.3" cy="8.6" r="1.7" fill="#3d97f2"/><circle cx="8.7" cy="8.6" r="1.7" fill="#3d97f2"/></svg><div class="sb" style="top:86.55px">Site</div><svg class="a" style="left:5px;top:96.5px" width="11" height="11" viewBox="0 0 11 11"><circle cx="5.5" cy="5.5" r="4.8" fill="#2aa7e0"/><circle cx="5.5" cy="5.5" r="3" fill="none" stroke="#dff3fc" stroke-width="0.8"/><path d="M5.5 1.2v8.6M1.2 5.5h8.6" stroke="#dff3fc" stroke-width="0.8"/><circle cx="5.5" cy="5.5" r="1.2" fill="#dff3fc"/></svg><div class="sb" style="top:108.75px">Network</div><svg class="a" style="left:5px;top:118.5px" width="12" height="12" viewBox="0 0 12 12"><path d="M3.4 8.6L8.8 3.2" stroke="#cfd6db" stroke-width="0.8"/><circle cx="8.8" cy="3" r="2.1" fill="#7dc43c"/><path d="M3.6 4.2a2.3 2.3 0 0 1 2.3 2.3c0 1.6-2.3 4.2-2.3 4.2s-2.3-2.6-2.3-4.2a2.3 2.3 0 0 1 2.3-2.3z" fill="#f5a623"/><circle cx="3.6" cy="6.5" r="0.9" fill="#fff"/></svg><div class="sb" style="top:131.95px">Path</div><svg class="a" style="left:5.5px;top:141.5px" width="11" height="12" viewBox="0 0 11 12"><rect x="1" y="0.5" width="9" height="11" rx="1.4" fill="#f5a328"/><rect x="2.3" y="1.8" width="6.4" height="8.4" rx="0.6" fill="#fbd38c"/><text x="5.5" y="8.6" font-size="7" font-weight="bold" text-anchor="middle" fill="#fff">R</text></svg><div class="sb" style="top:153.65px">Runbook
Template</div><svg class="a" style="left:5.5px;top:169.5px" width="11" height="11" viewBox="0 0 11 11"><rect x="0.6" y="0.6" width="9.8" height="9.8" rx="1" fill="#3f94ee"/><rect x="1.6" y="1.6" width="7.8" height="7.8" fill="#d9ecfc"/><circle cx="4.3" cy="5" r="2.2" fill="#e8574a"/><path d="M4.3 5V2.8A2.2 2.2 0 0 1 6.5 5z" fill="#7cc242"/><rect x="7.1" y="3" width="1.6" height="1" fill="#f5a623"/><rect x="7.1" y="5" width="1.6" height="1" fill="#3f94ee"/><rect x="2.3" y="8" width="6.4" height="0.7" fill="#3f94ee"/></svg><div class="sb" style="top:181.25px">PA
Dashboard</div><svg class="a" style="left:5.5px;top:196px" width="11" height="12" viewBox="0 0 11 12"><rect x="0.6" y="0.6" width="9.8" height="10.8" rx="1" fill="#38a9b8"/><rect x="1.6" y="1.6" width="7.8" height="8.8" fill="#cdeef0"/><path d="M3 8.6L5.4 5.2L7.8 8.6" fill="none" stroke="#f5a623" stroke-width="0.9"/><circle cx="5.4" cy="4.6" r="1.2" fill="#38a9b8"/><circle cx="3" cy="8.6" r="1" fill="#f5a623"/><circle cx="7.8" cy="8.6" r="1" fill="#7cc242"/></svg><div class="sb" style="top:208.65px">Network
Change</div><svg class="a" style="left:5.5px;top:223.5px" width="11" height="11" viewBox="0 0 11 11"><rect x="0.6" y="0.6" width="9.8" height="9.8" rx="1" fill="#3f94ee"/><rect x="1.6" y="1.6" width="7.8" height="7.8" fill="#d9ecfc"/><path d="M2.6 2.6L8.4 8.4M8.4 2.6L2.6 8.4" stroke="#3f94ee" stroke-width="0.8"/><circle cx="2.9" cy="2.9" r="0.9" fill="#3f94ee"/><circle cx="8.1" cy="8.1" r="0.9" fill="#3f94ee"/><circle cx="8.1" cy="2.9" r="0.9" fill="#3f94ee"/><circle cx="2.9" cy="8.1" r="0.9" fill="#3f94ee"/><circle cx="5.5" cy="5.5" r="1.1" fill="#3f94ee"/></svg><div class="sb" style="top:236.25px">Data
Accuracy</div><div class="sb" style="top:391.65px">Map</div><div class="sb" style="top:408.65px">Desktop</div></div>
</body></html>
